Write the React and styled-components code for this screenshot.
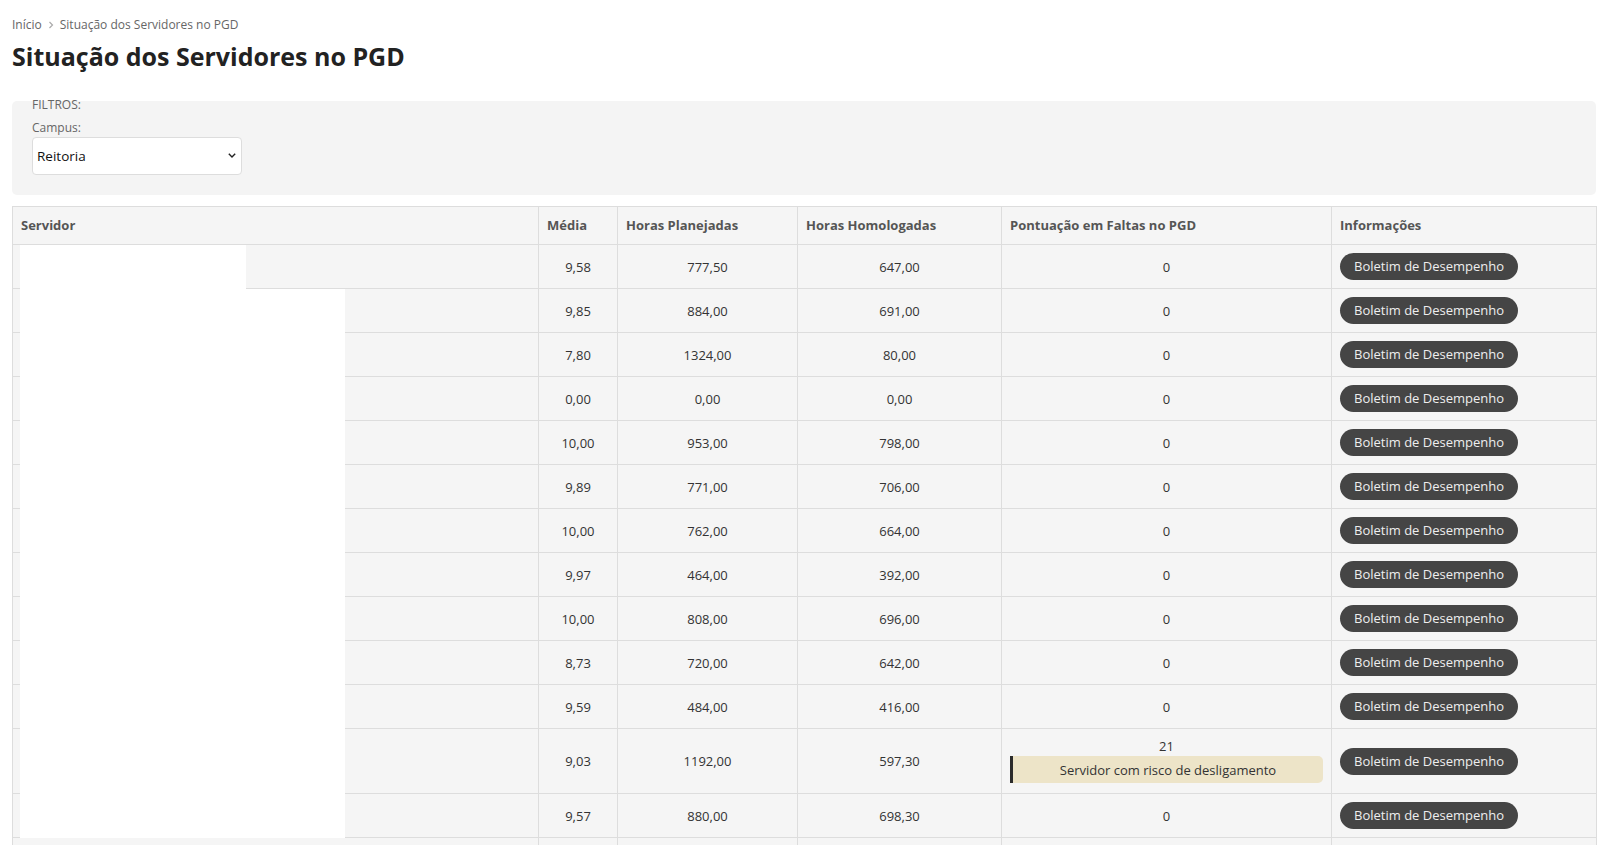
import React from "react";
import styled, { createGlobalStyle } from "styled-components";

const GlobalStyle = createGlobalStyle`
  html, body { margin: 0; padding: 0; background: #ffffff; }
  body { font-family: "Open Sans", "Noto Sans", sans-serif; color: #333333; }
  * { box-sizing: border-box; }
`;

const Page = styled.div`
  padding: 16px 12px 0 12px;
`;

const Breadcrumb = styled.nav`
  display: flex;
  align-items: center;
  gap: 6px;
  font-size: 12px;
  line-height: 18px;
  color: #666666;
`;

const Crumb = styled.span`
  color: #666666;
`;

const Sep = styled.svg`
  width: 6px;
  height: 8px;
  flex: none;
`;

const Title = styled.h1`
  margin: 6px 0 0 0;
  font-size: 25px;
  line-height: 32px;
  font-weight: 700;
  color: #222222;
`;

const FilterPanel = styled.section`
  margin-top: 29px;
  background: #f4f4f4;
  border-radius: 5px;
  padding: 0 20px 20px 20px;
  display: flex;
  flex-direction: column;
  align-items: flex-start;
`;

const Legend = styled.div`
  margin-top: -4px;
  font-size: 12px;
  line-height: 16px;
  color: #666666;
`;

const FieldLabel = styled.label`
  margin-top: 7px;
  font-size: 12px;
  line-height: 16px;
  color: #666666;
`;

const SelectWrap = styled.div`
  position: relative;
  margin-top: 1px;
  width: 210px;
  height: 38px;
`;

const Select = styled.select`
  appearance: none;
  -webkit-appearance: none;
  width: 100%;
  height: 100%;
  border: 1px solid #dddddd;
  border-radius: 4px;
  background: #ffffff;
  padding: 0 24px 0 4px;
  font-family: "Open Sans", "Noto Sans", sans-serif;
  font-size: 13.5px;
  color: #111111;
  outline: none;
`;

const Chevron = styled.svg`
  position: absolute;
  right: 6px;
  top: 16px;
  width: 8px;
  height: 5px;
  pointer-events: none;
`;

const TableWrap = styled.div`
  position: relative;
  margin-top: 11px;
`;

const Table = styled.table`
  width: 1584px;
  border-collapse: collapse;
  table-layout: fixed;
  background: #f5f5f5;
  font-size: 13px;
`;

const HeadCell = styled.th`
  text-align: left;
  font-weight: 700;
  color: #555555;
  padding: 9px 8px;
  line-height: 19px;
  border: 1px solid #dddddd;
  background: #f5f5f5;
`;

const Cell = styled.td`
  text-align: ${(p) => (p.$align === "left" ? "left" : "center")};
  color: #333333;
  padding: 8px;
  line-height: 18px;
  height: 44px;
  border: 1px solid #dddddd;
  vertical-align: middle;
`;

const PillButton = styled.button`
  height: 27px;
  padding: 0 14px;
  border: none;
  border-radius: 14px;
  background: #454545;
  color: #eeeeee;
  font-family: "Open Sans", "Noto Sans", sans-serif;
  font-size: 13px;
  line-height: 27px;
  cursor: pointer;
  display: inline-block;
  vertical-align: middle;
`;

const Warning = styled.div`
  margin: 1px 0 2px 0;
  height: 27px;
  display: flex;
  align-items: center;
  justify-content: center;
  background: #ede4c8;
  border-left: 3px solid #2b2b2b;
  border-radius: 0 5px 5px 0;
  color: #333333;
  font-size: 13px;
`;

const Redaction = styled.div`
  position: absolute;
  left: 8px;
  background: #ffffff;
`;

const rows = [
  ["9,58", "777,50", "647,00", "0"],
  ["9,85", "884,00", "691,00", "0"],
  ["7,80", "1324,00", "80,00", "0"],
  ["0,00", "0,00", "0,00", "0"],
  ["10,00", "953,00", "798,00", "0"],
  ["9,89", "771,00", "706,00", "0"],
  ["10,00", "762,00", "664,00", "0"],
  ["9,97", "464,00", "392,00", "0"],
  ["10,00", "808,00", "696,00", "0"],
  ["8,73", "720,00", "642,00", "0"],
  ["9,59", "484,00", "416,00", "0"],
  ["9,03", "1192,00", "597,30", "21", true],
  ["9,57", "880,00", "698,30", "0"],
  ["9,12", "760,00", "640,00", "0"],
];

const widths = [526, 79, 180, 204, 330, 265];

export default function App() {
  return (
    <>
      <GlobalStyle />
      <Page>
        <Breadcrumb>
          <Crumb>Início</Crumb>
          <Sep viewBox="0 0 6 8">
            <path d="M1.5 1 L4.5 4 L1.5 7" fill="none" stroke="#aaaaaa" strokeWidth="1.2" />
          </Sep>
          <Crumb>Situação dos Servidores no PGD</Crumb>
        </Breadcrumb>
        <Title>Situação dos Servidores no PGD</Title>

        <FilterPanel>
          <Legend>FILTROS:</Legend>
          <FieldLabel htmlFor="campus">Campus:</FieldLabel>
          <SelectWrap>
            <Select id="campus" defaultValue="reitoria">
              <option value="reitoria">Reitoria</option>
            </Select>
            <Chevron viewBox="0 0 8 5">
              <path d="M0.8 0.8 L4 4 L7.2 0.8" fill="none" stroke="#222222" strokeWidth="1.4" />
            </Chevron>
          </SelectWrap>
        </FilterPanel>

        <TableWrap>
          <Table>
            <colgroup>
              {widths.map((w, i) => (
                <col key={i} style={{ width: w }} />
              ))}
            </colgroup>
            <thead>
              <tr>
                <HeadCell>Servidor</HeadCell>
                <HeadCell>Média</HeadCell>
                <HeadCell>Horas Planejadas</HeadCell>
                <HeadCell>Horas Homologadas</HeadCell>
                <HeadCell>Pontuação em Faltas no PGD</HeadCell>
                <HeadCell>Informações</HeadCell>
              </tr>
            </thead>
            <tbody>
              {rows.map((r, i) => (
                <tr key={i}>
                  <Cell $align="left"></Cell>
                  <Cell>{r[0]}</Cell>
                  <Cell>{r[1]}</Cell>
                  <Cell>{r[2]}</Cell>
                  <Cell>
                    {r[3]}
                    {r[4] && <Warning>Servidor com risco de desligamento</Warning>}
                  </Cell>
                  <Cell $align="left">
                    <PillButton>Boletim de Desempenho</PillButton>
                  </Cell>
                </tr>
              ))}
            </tbody>
          </Table>
          <Redaction style={{ top: 39, width: 226, height: 44 }} />
          <Redaction style={{ top: 83, width: 325, height: 549 }} />
        </TableWrap>
      </Page>
    </>
  );
}
